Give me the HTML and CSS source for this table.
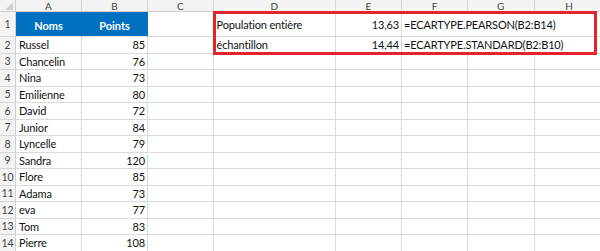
FILE: index.html
```html
<!DOCTYPE html>
<html lang="fr">
<head>
<meta charset="utf-8">
<title>ECARTYPE</title>
<link rel="stylesheet" href="styles.css">
</head>
<body>
<div class="wrap">
  <div class="sheet">
    <div class="corner"><span class="tri"></span></div>
    <div class="h">A</div><div class="h">B</div><div class="h">C</div><div class="h">D</div><div class="h">E</div><div class="h">F</div><div class="h">G</div><div class="h">H</div>

    <div class="rh">1</div><div class="c t">Noms</div><div class="c t">Points</div><div class="c"></div><div class="c">Population entière</div><div class="c n">13,63</div><div class="c wide">=ECARTYPE.PEARSON(B2:B14)</div>
    <div class="rh">2</div><div class="c">Russel</div><div class="c n">85</div><div class="c"></div><div class="c">échantillon</div><div class="c n">14,44</div><div class="c wide">=ECARTYPE.STANDARD(B2:B10)</div>
    <div class="rh">3</div><div class="c">Chancelin</div><div class="c n">76</div><div class="c"></div><div class="c"></div><div class="c"></div><div class="c"></div><div class="c"></div><div class="c"></div>
    <div class="rh">4</div><div class="c">Nina</div><div class="c n">73</div><div class="c"></div><div class="c"></div><div class="c"></div><div class="c"></div><div class="c"></div><div class="c"></div>
    <div class="rh">5</div><div class="c">Emilienne</div><div class="c n">80</div><div class="c"></div><div class="c"></div><div class="c"></div><div class="c"></div><div class="c"></div><div class="c"></div>
    <div class="rh">6</div><div class="c">David</div><div class="c n">72</div><div class="c"></div><div class="c"></div><div class="c"></div><div class="c"></div><div class="c"></div><div class="c"></div>
    <div class="rh">7</div><div class="c">Junior</div><div class="c n">84</div><div class="c"></div><div class="c"></div><div class="c"></div><div class="c"></div><div class="c"></div><div class="c"></div>
    <div class="rh">8</div><div class="c">Lyncelle</div><div class="c n">79</div><div class="c"></div><div class="c"></div><div class="c"></div><div class="c"></div><div class="c"></div><div class="c"></div>
    <div class="rh">9</div><div class="c">Sandra</div><div class="c n">120</div><div class="c"></div><div class="c"></div><div class="c"></div><div class="c"></div><div class="c"></div><div class="c"></div>
    <div class="rh">10</div><div class="c">Flore</div><div class="c n">85</div><div class="c"></div><div class="c"></div><div class="c"></div><div class="c"></div><div class="c"></div><div class="c"></div>
    <div class="rh">11</div><div class="c">Adama</div><div class="c n">73</div><div class="c"></div><div class="c"></div><div class="c"></div><div class="c"></div><div class="c"></div><div class="c"></div>
    <div class="rh">12</div><div class="c">eva</div><div class="c n">77</div><div class="c"></div><div class="c"></div><div class="c"></div><div class="c"></div><div class="c"></div><div class="c"></div>
    <div class="rh">13</div><div class="c">Tom</div><div class="c n">83</div><div class="c"></div><div class="c"></div><div class="c"></div><div class="c"></div><div class="c"></div><div class="c"></div>
    <div class="rh">14</div><div class="c">Pierre</div><div class="c n">108</div><div class="c"></div><div class="c"></div><div class="c"></div><div class="c"></div><div class="c"></div><div class="c"></div>
  </div>
  <div class="callout"></div>
</div>
</body>
</html>
```

FILE: styles.css
```css
html, body {
  margin: 0;
  padding: 0;
  background: #ffffff;
  overflow: hidden;
}
.wrap {
  position: relative;
  width: 600px;
  height: 251px;
  overflow: hidden;
}
.sheet {
  display: grid;
  grid-template-columns: 16px 66px 66px 65.5px 122.5px 66px 66px 66.5px 70px;
  grid-template-rows: 12px 25px repeat(13, 16.5px);
  font-family: Lato, "Liberation Sans", sans-serif;
  font-size: 11px;
  letter-spacing: -0.15px;
  color: #111111;
}
.corner {
  background: #f3f3f3;
  border-right: 1px solid #cfcfcf;
  border-bottom: 1px solid #cfcfcf;
  box-sizing: border-box;
  display: flex;
  justify-content: flex-end;
  align-items: flex-end;
  padding: 0 2px 1px 0;
}
.tri {
  width: 0;
  height: 0;
  border-left: 8px solid transparent;
  border-bottom: 8px solid #d2d2d2;
}
.h {
  background: #f3f3f3;
  border-right: 1px solid #d5d5d5;
  border-bottom: 1px solid #cfcfcf;
  box-sizing: border-box;
  display: flex;
  align-items: center;
  justify-content: center;
  font-size: 10px;
  letter-spacing: 0;
  color: #444444;
  line-height: 1;
}
.rh {
  background: #f3f3f3;
  border-right: 1px solid #cfcfcf;
  border-bottom: 1px solid #d5d5d5;
  box-sizing: border-box;
  display: flex;
  align-items: center;
  justify-content: center;
  font-size: 10.5px;
  letter-spacing: 0;
  color: #444444;
}
.c {
  border-right: 1px solid #dadada;
  border-bottom: 1px solid #dadada;
  box-sizing: border-box;
  display: flex;
  align-items: center;
  padding: 0 3px;
  white-space: nowrap;
  overflow: visible;
  min-width: 0;
}
.n {
  justify-content: flex-end;
  padding-right: 2px;
}
.t {
  background: #0070c0;
  border-color: #0070c0;
  border-bottom-color: #e6e6e6;
  color: #ffffff;
  font-weight: bold;
  font-size: 11px;
  letter-spacing: 0;
  justify-content: center;
  padding-top: 2px;
}
.wide {
  grid-column: span 3;
  padding-left: 2px;
}
.callout {
  position: absolute;
  left: 213px;
  top: 11px;
  width: 384px;
  height: 44px;
  border: 3px solid #e3242b;
  box-sizing: border-box;
  pointer-events: none;
}
```
